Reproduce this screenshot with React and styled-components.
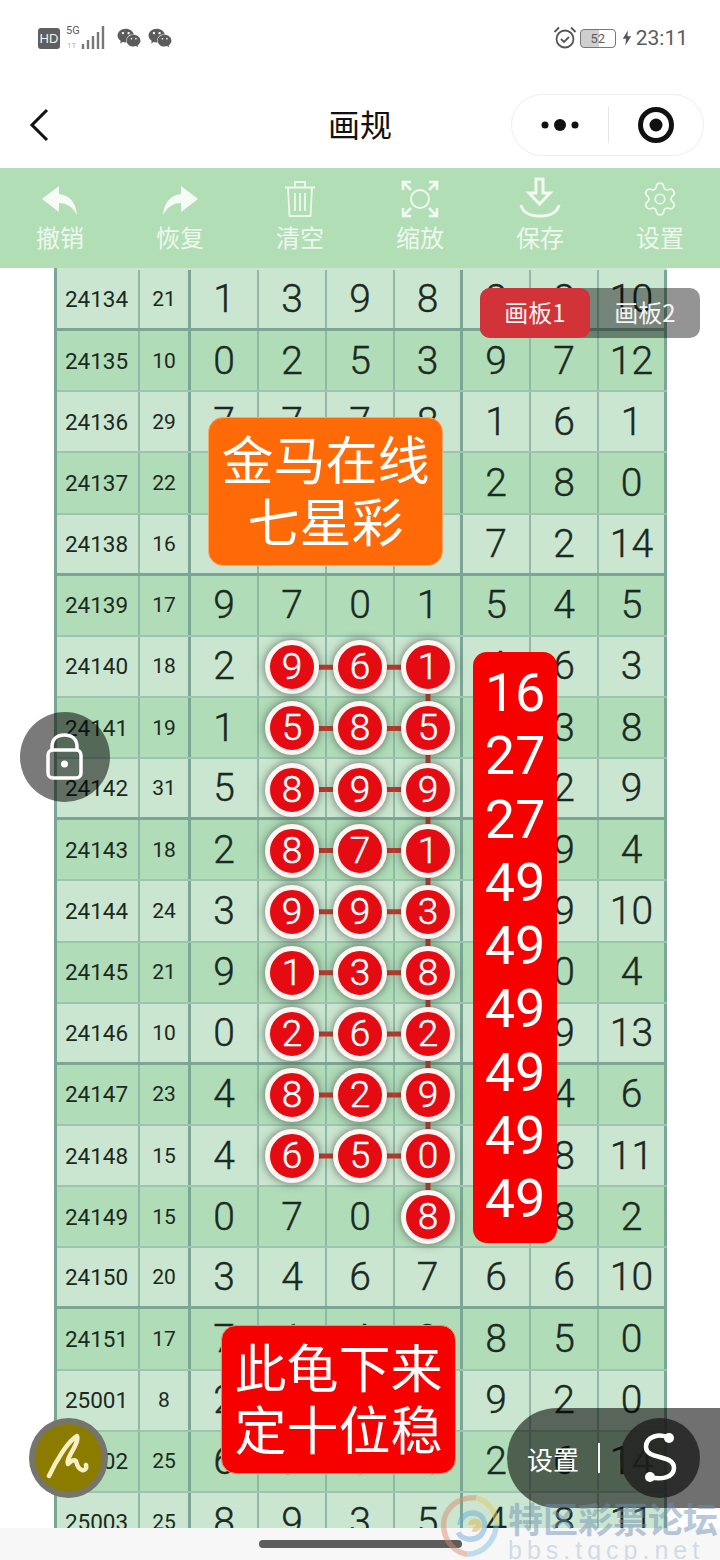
import React from "react"
import styled, { createGlobalStyle } from "styled-components"
import { FaWeixin } from "react-icons/fa"
import { Settings } from "lucide-react"

const CJK = `"Noto Sans CJK SC", "Noto Sans", sans-serif`
const NUM = `Roboto, "Noto Sans", sans-serif`

const GlobalStyle = createGlobalStyle`
  html, body { margin: 0; padding: 0; background: #fff; }
  * { box-sizing: border-box; }
`

const Page = styled.div`
  position: relative;
  width: 720px;
  height: 1560px;
  overflow: hidden;
  display: flex;
  flex-direction: column;
  background: #fff;
  font-family: ${CJK};
`

// phone status bar
const StatusBar = styled.div`
  height: 70px;
  padding: 6px 32px 0 38px;
  display: flex;
  align-items: center;
  justify-content: space-between;
  color: #5c5c5c;
`

const StatusGroup = styled.div`
  display: flex;
  align-items: center;
  gap: ${p => p.$gap || 0}px;
`

const HdBadge = styled.div`
  width: 22px;
  height: 21px;
  border-radius: 3px;
  background: #5f5f5f;
  color: #f2f2f2;
  font: 400 13px "Liberation Sans", sans-serif;
  display: flex;
  align-items: center;
  justify-content: center;
`

const Chats = styled(StatusGroup)`
  margin-left: 12px;
`

const Battery = styled.div`
  width: 36px;
  height: 19px;
  margin: 0 6px 0 3px;
  border: 1.5px solid #777;
  border-radius: 4px;
  background: linear-gradient(90deg, #cfcfcf 52%, #fff 52%);
  font: 400 13px ${NUM};
  display: flex;
  align-items: center;
  justify-content: center;
`

const Clock = styled.span`
  margin-left: 4px;
  font: 400 21px ${NUM};
  color: #5c5c5c;
`

const NavBar = styled.div`
  height: 98px;
  padding: 0 16px 0 28px;
  position: relative;
  display: flex;
  align-items: center;
  justify-content: space-between;
`

const Title = styled.h1`
  position: absolute;
  left: 0;
  right: 0;
  top: 31px;
  margin: 0;
  text-align: center;
  font: 400 32px/44px ${CJK};
  color: #111;
`

const Capsule = styled.div`
  width: 193px;
  height: 62px;
  margin-top: 12px;
  border: 1px solid #eeeeee;
  border-radius: 31px;
  display: grid;
  grid-template-columns: 96px 1px 1fr;
  align-items: center;
  justify-items: center;
`

const CapsuleLine = styled.div`
  width: 1px;
  height: 36px;
  background: #e6e6e6;
`

const Toolbar = styled.div`
  height: 100px;
  background: #b2deb6;
  display: grid;
  grid-template-columns: repeat(6, 120px);
`

const Tool = styled.div`
  display: flex;
  flex-direction: column;
  align-items: center;
  color: #eef8ee;
  font-size: 24px;
  line-height: 32px;
`

const ToolIcon = styled.div`
  height: 53px;
  padding-top: 12px;
  display: flex;
  align-items: flex-start;
  justify-content: center;
`

const ArrowIcon = styled.svg`
  margin-top: 6px;
  transform: ${p => (p.$flip ? "scaleX(-1)" : "none")};
`

const Board = styled.div`
  height: 1260px;
  overflow: hidden;
`

const Sheet = styled.div`
  width: 613px;
  margin-left: 54px;
  border-left: 3px solid #7ba595;
`

const Row = styled.div`
  display: grid;
  grid-template-columns: 83px 51px repeat(7, 68px);
  height: 61.15px;
  background: ${p => (p.$dark ? "#b1dcb8" : "#cbe6d0")};
  border-bottom: ${p => (p.$heavy ? "3px solid #7ba595" : "2px solid #9cc4ae")};

  &:first-child {
    height: 63.15px;
    padding-top: 2px;
  }
`

const Cell = styled.div`
  display: flex;
  align-items: center;
  justify-content: center;
  padding-right: ${p => (p.$kind === "seq" ? 2 : 0)}px;
  color: #1a2921;
  font-family: ${NUM};
  font-weight: ${p => (p.$kind === "digit" ? 300 : 400)};
  font-size: ${p => (p.$kind === "digit" ? 39 : p.$kind === "seq" ? 22.5 : 21)}px;
  -webkit-text-stroke: ${p => (p.$kind === "digit" ? 0.4 : 0)}px #1a2921;
  border-right: ${p => (p.$heavy ? "3px solid #7ba595" : "2px solid #8fb9a4")};
`

const Footer = styled.div`
  flex: 1;
  background: #f7f7f7;
  display: flex;
  justify-content: center;
  padding-top: 12px;
`

const HomeBar = styled.div`
  width: 203px;
  height: 8px;
  border-radius: 4px;
  background: #5c5c5c;
`

// things floating over the sheet
const Connectors = styled.svg`
  position: absolute;
  left: 0;
  top: 0;
`

const Pin = styled.div`
  position: absolute;
  width: 54px;
  height: 54px;
  margin: -27px 0 0 -27px;
  border: 5px solid #fff6f4;
  border-radius: 50%;
  background: #e40c12;
  color: #fff;
  box-shadow: 0 0 10px rgba(50, 70, 60, 0.75);
  font: 300 37px/44px ${NUM};
  -webkit-text-stroke: 0.5px #fff;
  text-align: center;
`

const Label = styled.div`
  position: absolute;
  left: ${p => p.$x}px;
  top: ${p => p.$y}px;
  width: 235px;
  height: 149px;
  padding-top: 9px;
  border-radius: 15px;
  border: 1px solid ${p => p.$edge};
  background: ${p => p.$bg};
  color: #fff;
  font-size: 52px;
  line-height: 62px;
  text-align: center;
`

const ScoreBar = styled.div`
  position: absolute;
  left: 473px;
  top: 652px;
  width: 84px;
  height: 591px;
  padding-top: 9px;
  border-radius: 14px;
  background: #f60000;
  color: #fff;
  font: 400 54px/63.25px ${NUM};
  text-align: center;
`

const Tabs = styled.div`
  position: absolute;
  left: 480px;
  top: 288px;
  width: 220px;
  height: 50px;
  border-radius: 10px;
  background: rgba(0, 0, 0, 0.42);
  display: grid;
  grid-template-columns: 110px 110px;
`

const Tab = styled.div`
  border-radius: 10px;
  background: ${p => (p.$active ? "#d13338" : "transparent")};
  color: #f4f4f4;
  font-size: 24px;
  line-height: 48px;
  text-align: center;
`

const LockButton = styled.div`
  position: absolute;
  left: 20px;
  top: 712px;
  width: 90px;
  height: 90px;
  border-radius: 50%;
  background: rgba(0, 0, 0, 0.52);
  display: flex;
  align-items: center;
  justify-content: center;
`

const PenButton = styled.div`
  position: absolute;
  left: 29px;
  top: 1418px;
  width: 79px;
  height: 80px;
  border: 6px solid #75756d;
  border-radius: 50%;
  background: #8b7c00;
  display: flex;
  align-items: center;
  justify-content: center;
`

const SettingsPill = styled.div`
  position: absolute;
  left: 507px;
  top: 1408px;
  width: 213px;
  height: 100px;
  border-radius: 50px 0 0 50px;
  background: rgba(0, 0, 0, 0.56);
  color: #fff;
  font-size: 26px;
  display: flex;
  align-items: center;
  padding-left: 20px;
`

const PillLine = styled.div`
  width: 2px;
  height: 30px;
  margin-left: 19px;
  background: #f4f4f4;
`

const PillKnob = styled.div`
  position: absolute;
  left: 113px;
  top: 10px;
  width: 80px;
  height: 80px;
  border-radius: 50%;
  background: rgba(32, 32, 32, 0.82);
`

const Stamp = styled.div`
  position: absolute;
  left: 440px;
  top: 1492px;
  width: 300px;
  height: 68px;
  display: flex;
  gap: 8px;
  opacity: 0.48;
`

const StampWords = styled.div`
  padding-top: 6px;
`

const StampText = styled.div`
  white-space: nowrap;
  color: #6f8fb4;
  font: 700 35px/40px ${CJK};
`

const StampUrl = styled.div`
  color: #a9bdd6;
  font: 400 25px/24px "Liberation Sans", sans-serif;
  letter-spacing: 5px;
`

const rows = [
  ["24134", 21, 1, 3, 9, 8, 8, 8, 10],
  ["24135", 10, 0, 2, 5, 3, 9, 7, 12],
  ["24136", 29, 7, 7, 7, 8, 1, 6, 1],
  ["24137", 22, 3, 0, 6, 2, 2, 8, 0],
  ["24138", 16, 4, 9, 1, 5, 7, 2, 14],
  ["24139", 17, 9, 7, 0, 1, 5, 4, 5],
  ["24140", 18, 2, 9, 6, 1, 4, 6, 3],
  ["24141", 19, 1, 5, 8, 5, 2, 3, 8],
  ["24142", 31, 5, 8, 9, 9, 7, 2, 9],
  ["24143", 18, 2, 8, 7, 1, 0, 9, 4],
  ["24144", 24, 3, 9, 9, 3, 1, 9, 10],
  ["24145", 21, 9, 1, 3, 8, 6, 0, 4],
  ["24146", 10, 0, 2, 6, 2, 5, 9, 13],
  ["24147", 23, 4, 8, 2, 9, 3, 4, 6],
  ["24148", 15, 4, 6, 5, 0, 2, 8, 11],
  ["24149", 15, 0, 7, 0, 8, 1, 8, 2],
  ["24150", 20, 3, 4, 6, 7, 6, 6, 10],
  ["24151", 17, 7, 1, 4, 2, 8, 5, 0],
  ["25001", 8, 2, 5, 3, 6, 9, 2, 0],
  ["25002", 25, 6, 7, 8, 4, 2, 6, 14],
  ["25003", 25, 8, 9, 3, 5, 4, 8, 11],
]

const pinRows = [
  [9, 6, 1], [5, 8, 5], [8, 9, 9], [8, 7, 1], [9, 9, 3],
  [1, 3, 8], [2, 6, 2], [8, 2, 9], [6, 5, 0], [null, null, 8],
]
const pinX = [292, 360, 428]
const pinY = i => 667.3 + i * 61.1

const scores = [16, 27, 27, 49, 49, 49, 49, 49, 49]

const PinLines = () => (
  <Connectors width="720" height="1560">
    <path d={`M428 ${pinY(0)} V${pinY(9)}`} stroke="#c23a2c" strokeWidth="5" />
    {pinRows.slice(0, 9).map((_, i) => (
      <path key={i} d={`M292 ${pinY(i)} H428`} stroke="#c23a2c" strokeWidth="5" />
    ))}
  </Connectors>
)

const SignalIcon = () => (
  <svg width="45" height="26" viewBox="-5 0 45 26">
    <text x="1" y="9" fontSize="11" fontFamily="Roboto" fill="#5c5c5c">5G</text>
    <text x="2" y="23" fontSize="8" fontFamily="Roboto" fill="#b5b5b5">1T</text>
    <path d="M18 24v-5M23 24v-9M28 24v-13M33 24v-17M38 24v-23" stroke="#777" strokeWidth="2.4" />
  </svg>
)

const AlarmIcon = () => (
  <svg width="24" height="24" viewBox="0 0 24 24" fill="none" stroke="#555" strokeWidth="1.8">
    <circle cx="12" cy="13" r="8.5" />
    <path d="M8 13l3 3 5-5M1.5 6L6 1.5M22.500 6L18 1.500" />
  </svg>
)

const BoltIcon = () => (
  <svg width="10" height="16" viewBox="0 0 12 18">
    <path d="M7 0L1 10h4l-1 8 7-11H6.500z" fill="#555" />
  </svg>
)

const BackIcon = () => (
  <svg width="24" height="36" viewBox="0 0 24 36" fill="none" stroke="#111" strokeWidth="3" style={{ marginTop: 12 }}>
    <path d="M19 3L4 18l15 15" />
  </svg>
)

const DotsIcon = () => (
  <svg width="44" height="16" viewBox="0 0 44 16" fill="#111">
    <circle cx="7" cy="8" r="3.500" />
    <circle cx="22" cy="8" r="6" />
    <circle cx="37" cy="8" r="3.500" />
  </svg>
)

const TargetIcon = () => (
  <svg width="40" height="40" viewBox="0 0 40 40">
    <circle cx="20" cy="20" r="15.500" fill="none" stroke="#111" strokeWidth="5" />
    <circle cx="20" cy="20" r="6.500" fill="#111" />
  </svg>
)

const ReplyIcon = ({ flip }) => (
  <ArrowIcon $flip={flip} width="36" height="30" viewBox="0 0 36 30">
    <path d="M0 13L17 0v8c10 1 17 8 18 21-5-9-11-12-18-12v9z" fill="#f5fbf5" />
  </ArrowIcon>
)

const TrashIcon = () => (
  <svg width="32" height="38" viewBox="0 0 32 38" fill="none" stroke="#eef8ee" strokeWidth="1.800">
    <path d="M1 7.500h30M11 7V2h10v5M4 8l1.500 28h21L28 8M11 13v18M16 13v18M21 13v18" />
  </svg>
)

const ZoomIcon = () => (
  <svg width="38" height="38" viewBox="0 0 38 38" fill="none" stroke="#f2faf2" strokeWidth="2.600">
    <circle cx="19" cy="19" r="9" strokeWidth="1.800" />
    <path d="M2 10V2h8M2 2l8 8M36 10V2h-8M36 2l-8 8M2 28v8h8M2 36l8-8M36 28v8h-8M36 36l-8-8" />
  </svg>
)

const SaveIcon = () => (
  <svg width="42" height="42" viewBox="0 0 42 42" fill="none" stroke="#f2faf2" strokeWidth="3" style={{ marginTop: -3 }}>
    <path d="M17 2h7v14h7L20.500 27 10 16h7zM2 28c2 8 10 11 19 11s17-3 19-11" />
  </svg>
)

const LockIcon = () => (
  <svg width="40" height="48" viewBox="0 0 40 48" fill="none" stroke="#fff" strokeWidth="3.500">
    <rect x="3" y="17" width="33" height="28" rx="5" />
    <path d="M7 17v-3C7 6 12 2 19.500 2S32 6 32 14v3" />
    <circle cx="19.500" cy="31" r="3.500" fill="#fff" stroke="none" />
  </svg>
)

const ScribbleIcon = () => (
  <svg width="46" height="50" viewBox="0 0 46 50" fill="none" stroke="#f6efc0" strokeWidth="4.500" strokeLinecap="round" strokeLinejoin="round">
    <path d="M3 43C10 28 22 8 31 3c3 8-12 22-9 28 3-3 6-5 8-3 1 3 1 7 6 9 3 1 5-2 4-5" />
  </svg>
)

const SwitchIcon = () => (
  <svg width="80" height="80" viewBox="0 0 80 80" fill="none" stroke="#fff" strokeWidth="4.500">
    <path d="M49 20C40 15 26 18 26 29c0 13 28 7 28 21 0 10-14 12-24 9" />
    <circle cx="49" cy="20" r="5" fill="#fff" stroke="none" />
    <circle cx="30" cy="59" r="5" fill="#fff" stroke="none" />
  </svg>
)

const SwirlIcon = () => (
  <svg width="60" height="68" viewBox="0 0 66 70" fill="none" strokeWidth="6">
    <path d="M40 4C18 2 3 18 4 36c1 16 12 28 26 30" stroke="#d98a6a" />
    <path d="M40 4c14 4 22 16 22 28" stroke="#e8c860" />
    <path d="M62 32c0 18-14 34-32 34" stroke="#7fbfe0" />
    <path d="M22 34c0-10 10-16 20-12 8 4 10 16 2 24-8 6-20 4-24-4" stroke="#6aa8d8" />
    <path d="M34 34c0-4 6-6 8-2s-2 8-6 6" stroke="#e0b040" />
  </svg>
)

const tools = [
  ["撤销", <ReplyIcon />],
  ["恢复", <ReplyIcon flip />],
  ["清空", <TrashIcon />],
  ["缩放", <ZoomIcon />],
  ["保存", <SaveIcon />],
  ["设置", <Settings size={38} strokeWidth={1.1} color="#eef8ee" />],
]

const App = () => {
  return (
    <Page>
      <GlobalStyle />
      <StatusBar>
        <StatusGroup>
          <HdBadge>HD</HdBadge>
          <SignalIcon />
          <Chats $gap={7}>
            <FaWeixin size={24} />
            <FaWeixin size={24} />
          </Chats>
        </StatusGroup>
        <StatusGroup>
          <AlarmIcon />
          <Battery>52</Battery>
          <BoltIcon />
          <Clock>23:11</Clock>
        </StatusGroup>
      </StatusBar>

      <NavBar>
        <BackIcon />
        <Title>画规</Title>
        <Capsule>
          <DotsIcon />
          <CapsuleLine />
          <TargetIcon />
        </Capsule>
      </NavBar>

      <Toolbar>
        {tools.map(([label, icon]) => (
          <Tool key={label}>
            <ToolIcon>{icon}</ToolIcon>
            {label}
          </Tool>
        ))}
      </Toolbar>

      <Board>
        <Sheet>
          {rows.map((row, i) => (
            <Row key={row[0]} $dark={i % 2 === 1} $heavy={i % 4 === 0}>
              {row.map((value, c) => (
                <Cell
                  key={c}
                  $kind={c === 0 ? "seq" : c === 1 ? "sum" : "digit"}
                  $heavy={c === 1 || c === 5 || c === 8}
                >
                  {value}
                </Cell>
              ))}
            </Row>
          ))}
        </Sheet>
      </Board>

      <Footer>
        <HomeBar />
      </Footer>

      <Label $x={208} $y={417} $bg="#ff6a08" $edge="#f8a868">金马在线<br />七星彩</Label>
      <Label $x={221} $y={1325} $bg="#f60000" $edge="#f88a70">此龟下来<br />定十位稳</Label>

      <PinLines />
      {pinRows.map((pins, i) =>
        pins.map((n, c) =>
          n === null ? null : (
            <Pin key={`${i}-${c}`} style={{ left: pinX[c], top: pinY(i) }}>{n}</Pin>
          )
        )
      )}

      <ScoreBar>
        {scores.map((s, i) => <div key={i}>{s}</div>)}
      </ScoreBar>

      <Tabs>
        <Tab $active>画板1</Tab>
        <Tab>画板2</Tab>
      </Tabs>

      <LockButton><LockIcon /></LockButton>
      <PenButton><ScribbleIcon /></PenButton>

      <SettingsPill>
        设置
        <PillLine />
        <PillKnob><SwitchIcon /></PillKnob>
      </SettingsPill>

      <Stamp>
        <SwirlIcon />
        <StampWords>
          <StampText>特区彩票论坛</StampText>
          <StampUrl>bbs.tqcp.net</StampUrl>
        </StampWords>
      </Stamp>
    </Page>
  )
}

export default App
